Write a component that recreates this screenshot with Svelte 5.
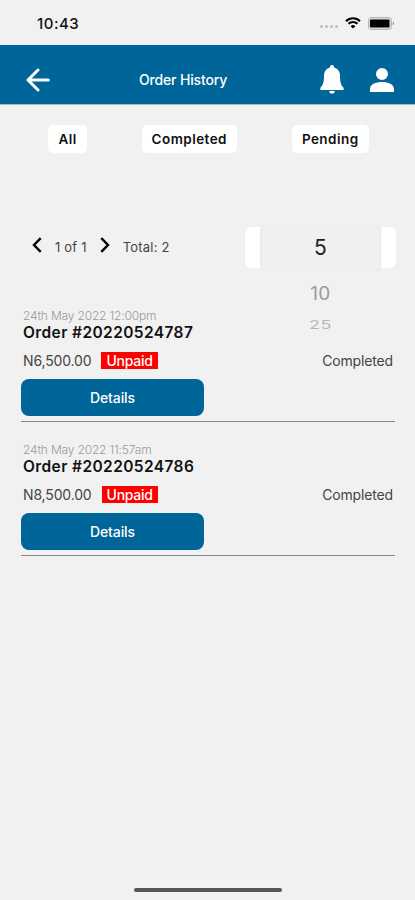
<script>
  const filters = ['All', 'Completed', 'Pending'];

  let page = 1;
  let pages = 1;
  let perPage = 5;

  let orders = [
    {
      id: '20220524787',
      date: '24th May 2022 12:00pm',
      amount: 'N6,500.00',
      payment: 'Unpaid',
      status: 'Completed'
    },
    {
      id: '20220524786',
      date: '24th May 2022 11:57am',
      amount: 'N8,500.00',
      payment: 'Unpaid',
      status: 'Completed'
    }
  ];
</script>

<main class="screen">
  <div class="status-bar">
    <span class="time">10:43</span>
    <div class="indicators">
      <div class="signal"><i></i><i></i><i></i><i></i></div>
      <svg class="wifi" viewBox="0 0 16 12">
        <path d="M1 4.2a10 10 0 0 1 14 0M3.5 6.8a6.4 6.4 0 0 1 9 0" />
        <path class="dot" d="M8 11.6 5.6 9.2a3.4 3.4 0 0 1 4.8 0z" />
      </svg>
      <svg class="battery" viewBox="0 0 27 13">
        <rect x="0.5" y="0.5" width="23" height="12" rx="3" fill="#d8d8d8" stroke="#b5b5b5" />
        <rect x="2" y="2.5" width="19.5" height="8" rx="1" fill="#000" />
        <path d="M24.8 4.5c1.7.7 1.7 3.3 0 4z" fill="#999" />
      </svg>
    </div>
  </div>

  <header>
    <button class="icon-button" aria-label="Back">
      <svg class="back" viewBox="0 0 24 24">
        <path d="M22.3 12H2.5M12 2 2 12l10 10" />
      </svg>
    </button>
    <h1>Order History</h1>
    <div class="actions">
      <button class="icon-button" aria-label="Notifications">
        <svg class="bell" viewBox="0 0 24 29">
          <path d="M12 0c-1.2 0-2 .8-2 2v.6C6 3.6 4 6.8 4 11c0 6-.8 9-3.6 11.8V25h23.2v-2.2C20.8 20 20 17 20 11c0-4.2-2-7.4-6-8.4V2c0-1.2-.8-2-2-2zM9.3 26a2.7 2.6 0 0 0 5.400 0z" />
        </svg>
      </button>
      <button class="icon-button" aria-label="Profile">
        <svg class="person" viewBox="0 0 24 24">
          <path d="M12 12a6 6 0 1 0 0-12 6 6 0 0 0 0 12zM12 14c-6.500 0-12 2.500-12 7.200V24h24v-2.800c0-4.700-5.500-7.200-12-7.200z" />
        </svg>
      </button>
    </div>
  </header>

  <nav class="filters">
    {#each filters as filter}
      <button>{filter}</button>
    {/each}
  </nav>

  <section class="toolbar">
    <div class="pager">
      <svg viewBox="0 0 10 16"><path d="M8.7 1.2 2 8l6.7 6.8" /></svg>
      <span class="pages">{page} of {pages}</span>
      <svg viewBox="0 0 10 16"><path d="M1.3 1.2 8 8l-6.7 6.8" /></svg>
      <span class="total">Total: {orders.length}</span>
    </div>
    <div class="picker">
      <div class="picker-field">
        <div class="picker-selected">{perPage}</div>
      </div>
      <span class="option near">10</span>
      <span class="option far">25</span>
    </div>
  </section>

  <section class="orders">
    {#each orders as order}
      <article>
        <p class="date">{order.date}</p>
        <h2>Order #{order.id}</h2>
        <div class="summary">
          <span class="amount">{order.amount}</span>
          <span class="badge">{order.payment}</span>
          <span class="status">{order.status}</span>
        </div>
        <button class="details">Details</button>
      </article>
    {/each}
  </section>

  <div class="home-indicator"></div>
</main>

<style>
  :global(body) {
    margin: 0;
    background: #f1f1f1;
  }

  .screen {
    display: flex;
    flex-direction: column;
    box-sizing: border-box;
    width: 415px;
    height: 900px;
    padding-bottom: 8px;
    overflow: hidden;
    background: #f1f1f1;
    color: #111;
    font-family: Inter, 'Liberation Sans', sans-serif;
  }

  button {
    padding: 0;
    border: none;
    background: none;
    color: inherit;
    font: inherit;
  }

  svg {
    display: block;
  }

  h1, h2, p {
    margin: 0;
  }

  .status-bar {
    display: flex;
    justify-content: space-between;
    align-items: center;
    box-sizing: border-box;
    height: 45px;
    padding: 1px 20px 0 37px;
  }

  .time {
    font-size: 15px;
    font-weight: 500;
    letter-spacing: 0.5px;
  }

  .indicators {
    display: flex;
    align-items: center;
    gap: 7px;
  }

  .signal {
    display: flex;
    gap: 2px;
    margin-top: 7px;
  }

  .signal i {
    width: 3px;
    height: 3px;
    border-radius: 50%;
    background: #bdbdbd;
  }

  .wifi {
    width: 16px;
    height: 12px;
    fill: none;
    stroke: #000;
    stroke-width: 2;
  }

  .wifi .dot {
    fill: #000;
    stroke: none;
  }

  .battery {
    width: 27px;
    height: 13px;
  }

  header {
    display: grid;
    grid-template-columns: 1fr auto 1fr;
    align-items: center;
    box-sizing: border-box;
    height: 59px;
    padding: 10px 21px 0 26px;
    background: #006699;
    color: #fff;
    box-shadow: 0 1px 0 #a3bccb;
  }

  .back {
    width: 24px;
    height: 24px;
    fill: none;
    stroke: #fff;
    stroke-width: 3;
    stroke-linecap: round;
    stroke-linejoin: round;
  }

  h1 {
    margin-right: 54px;
    font-size: 14px;
    font-weight: 500;
    letter-spacing: -0.15px;
  }

  .actions {
    display: flex;
    justify-content: flex-end;
    align-items: center;
    gap: 26px;
  }

  .bell {
    width: 24px;
    height: 29px;
    fill: #fff;
  }

  .person {
    width: 24px;
    height: 24px;
    fill: #fff;
  }

  .filters {
    display: flex;
    justify-content: space-around;
    padding: 21px 19px 0 21px;
  }

  .filters button {
    height: 28px;
    padding: 0 10px;
    border-radius: 5px;
    background: #fff;
    font-size: 13.5px;
    font-weight: 600;
    letter-spacing: 0.45px;
  }

  .toolbar {
    display: flex;
    justify-content: space-between;
    height: 84px;
    margin-top: 71px;
    padding: 0 19px 0 32px;
  }

  .pager {
    display: flex;
    align-items: center;
    height: 44px;
    color: #444;
    font-size: 13px;
    letter-spacing: 0.2px;
  }

  .pager svg {
    width: 10px;
    height: 16px;
    margin-bottom: 3px;
    fill: none;
    stroke: #000;
    stroke-width: 2.4;
  }

  .pages {
    margin: 2px 13px 0;
  }

  .total {
    margin: 2px 0 0 13px;
  }

  .picker {
    display: flex;
    flex-direction: column;
    align-items: center;
    width: 151px;
  }

  .picker-field {
    display: flex;
    flex: none;
    justify-content: center;
    align-items: center;
    width: 100%;
    height: 41px;
    margin-top: 3px;
    border-radius: 6px;
    background: #fff;
  }

  .picker-selected {
    flex: none;
    width: 121px;
    height: 46px;
    border-radius: 5px;
    background: #f0f0f0;
    box-shadow: inset 0 0 2px #ddd;
    color: #222;
    font-size: 21px;
    line-height: 46px;
    text-align: center;
  }

  .option {
    flex: none;
    font-size: 19px;
    line-height: 22px;
    letter-spacing: 0.5px;
  }

  .near {
    margin-top: 15px;
    color: #9a9a9a;
    transform: scaleY(0.95);
  }

  .far {
    margin-top: 9px;
    color: #b8b8b8;
    font-size: 18px;
    transform: scaleY(0.65);
  }

  .orders {
    padding: 0 20px 0 21px;
  }

  article {
    box-sizing: border-box;
    height: 134px;
    padding-top: 20px;
    border-bottom: 1px solid #888;
  }

  article:first-child {
    height: 114px;
    padding-top: 0;
  }

  .date {
    padding-left: 2px;
    color: #999;
    font-size: 12px;
    font-weight: 300;
    line-height: 16px;
    letter-spacing: -0.17px;
  }

  h2 {
    padding-left: 2px;
    font-size: 15.5px;
    font-weight: 600;
    line-height: 18px;
    letter-spacing: 0.4px;
  }

  .summary {
    display: flex;
    align-items: center;
    height: 18px;
    margin-top: 9px;
    padding: 0 2px;
    color: #444;
    font-size: 14px;
    letter-spacing: -0.15px;
  }

  .badge {
    height: 17px;
    margin-left: 10px;
    padding: 0 5px;
    background: #ff0000;
    color: #fff;
    font-weight: 500;
    line-height: 17px;
    letter-spacing: -0.25px;
  }

  .status {
    margin-left: auto;
  }

  .details {
    display: block;
    width: 183px;
    height: 37px;
    margin-top: 10px;
    border-radius: 8px;
    background: #006699;
    color: #fff;
    font-size: 14px;
    font-weight: 500;
    letter-spacing: -0.1px;
  }

  .home-indicator {
    width: 148px;
    height: 4px;
    margin: auto auto 0;
    border-radius: 3px;
    background: #555;
  }
</style>
